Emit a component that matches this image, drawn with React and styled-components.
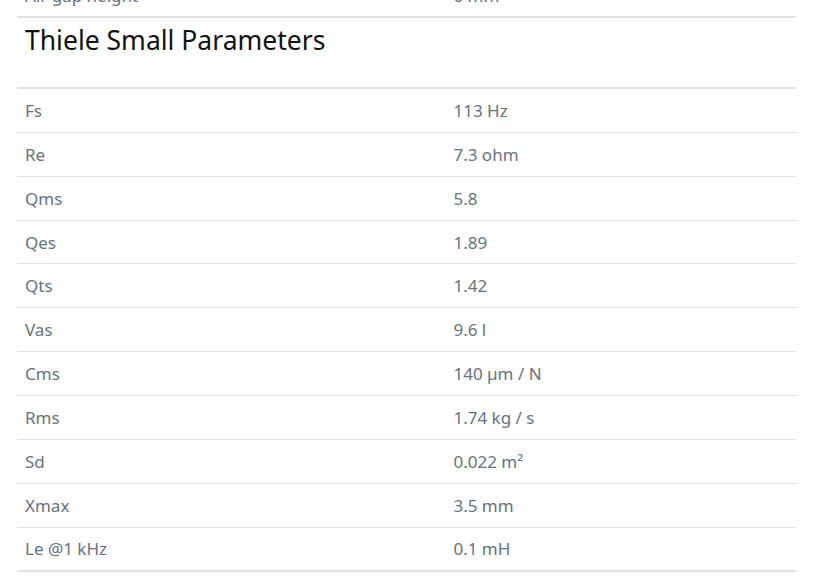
import React from "react";
import styled, { createGlobalStyle } from "styled-components";

const Global = createGlobalStyle`
  html, body { margin: 0; padding: 0; background: #fff; }
  body { font-family: "Noto Sans", "Open Sans", sans-serif; overflow: hidden; }
`;

const Page = styled.div`
  padding: 0 26px 0 17px;
  margin-top: -27px;
`;

const Table = styled.table`
  width: 100%;
  border-collapse: collapse;
  table-layout: fixed;
`;

const Col = styled.col`
  width: ${(p) => p.$w || "auto"};
`;

const Row = styled.tr`
  height: 43.9px;
  border-top: 1px solid #dee2e6;
  border-bottom: ${(p) => (p.$thick ? "2px solid #dee2e6" : "none")};
`;

const HeadRow = styled.tr`
  border-bottom: 2px solid #dee2e6;
`;

const Cell = styled.td`
  padding: 0 8px;
  font-size: 17px;
  color: #66737d;
  vertical-align: middle;
  white-space: nowrap;
`;

const HeadCell = styled.th`
  padding: 6px 8px 31px;
  text-align: left;
  font-weight: 400;
`;

const Heading = styled.h3`
  margin: 0;
  font-size: 26.5px;
  font-weight: 400;
  line-height: 32px;
  color: #111;
`;

const rows = [
  ["Fs", "113 Hz"],
  ["Re", "7.3 ohm"],
  ["Qms", "5.8"],
  ["Qes", "1.89"],
  ["Qts", "1.42"],
  ["Vas", "9.6 l"],
  ["Cms", "140 µm / N"],
  ["Rms", "1.74 kg / s"],
  ["Sd", "0.022 m²"],
  ["Xmax", "3.5 mm"],
  ["Le @1 kHz", "0.1 mH"],
];

const Cols = () => (
  <colgroup>
    <Col $w="55%" />
    <Col $w="45%" />
  </colgroup>
);

export default function App() {
  return (
    <>
      <Global />
      <Page>
        <Table>
          <Cols />
          <tbody>
            <Row $thick>
              <Cell>Air gap height</Cell>
              <Cell>6 mm</Cell>
            </Row>
          </tbody>
        </Table>
        <Table>
          <Cols />
          <thead>
            <HeadRow>
              <HeadCell colSpan={2}>
                <Heading>Thiele Small Parameters</Heading>
              </HeadCell>
            </HeadRow>
          </thead>
          <tbody>
            {rows.map(([k, v], i) => (
              <Row key={k} $thick={i === rows.length - 1}>
                <Cell>{k}</Cell>
                <Cell>{v}</Cell>
              </Row>
            ))}
          </tbody>
        </Table>
      </Page>
    </>
  );
}
